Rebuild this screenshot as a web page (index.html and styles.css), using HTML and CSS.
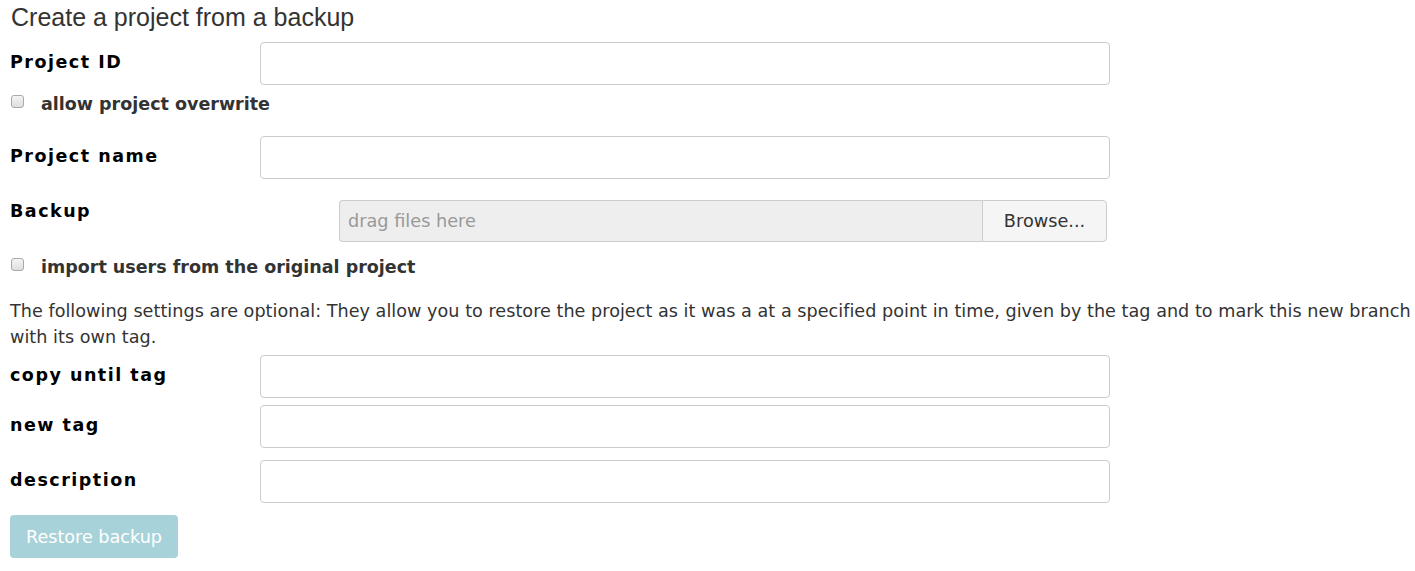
FILE: index.html
```html
<!DOCTYPE html>
<html>
<head>
<meta charset="utf-8">
<link rel="stylesheet" href="styles.css">
</head>
<body>
<div class="page">
  <h1 class="title">Create a project from a backup</h1>
  <div class="row row-id">
    <label class="lbl">Project ID</label>
    <input class="field" type="text">
  </div>
  <div class="check check-overwrite">
    <span class="box"></span>
    <span class="check-text">allow project overwrite</span>
  </div>
  <div class="row row-name">
    <label class="lbl">Project name</label>
    <input class="field" type="text">
  </div>
  <div class="row row-backup">
    <label class="lbl lbl-top">Backup</label>
    <div class="file-group">
      <div class="file-drop">drag files here</div>
      <div class="file-btn">Browse...</div>
    </div>
  </div>
  <div class="check check-users">
    <span class="box"></span>
    <span class="check-text">import users from the original project</span>
  </div>
  <p class="note">The following settings are optional: They allow you to restore the project as it was a at a specified point in time, given by the tag and to mark this new branch with its own tag.</p>
  <div class="row row-copy">
    <label class="lbl">copy until tag</label>
    <input class="field" type="text">
  </div>
  <div class="row row-tag">
    <label class="lbl">new tag</label>
    <input class="field" type="text">
  </div>
  <div class="row row-desc">
    <label class="lbl">description</label>
    <input class="field" type="text">
  </div>
  <button class="restore" disabled>Restore backup</button>
</div>
</body>
</html>
```

FILE: styles.css
```css
html, body {
  margin: 0;
  padding: 0;
  background: #fff;
}
.page {
  padding: 0 0 0 10px;
  font-family: "DejaVu Sans", Verdana, sans-serif;
  font-size: 17.5px;
  color: #333;
}
.title {
  font-family: "Liberation Sans", Arial, sans-serif;
  font-weight: normal;
  font-size: 25px;
  line-height: 28px;
  margin: 3px 0 0 1px;
  color: #333;
}
.row {
  display: flex;
  align-items: flex-start;
}
.lbl {
  width: 250px;
  flex: none;
  font-weight: bold;
  font-size: 17.5px;
  line-height: 22px;
  letter-spacing: 1.5px;
  color: #000;
  padding-top: 9px;
}
.lbl-top {
  padding-top: 0;
}
.field {
  box-sizing: border-box;
  width: 850px;
  height: 43px;
  margin: 0;
  border: 1px solid #ccc;
  border-radius: 4px;
  background: #fff;
  padding: 6px 12px;
}
.row-id { margin-top: 11px; }
.row-name { margin-top: 21px; }
.row-backup { margin-top: 21px; }
.row-copy { margin-top: 5px; }
.row-tag { margin-top: 7px; }
.row-desc { margin-top: 12px; }

.check {
  display: flex;
  align-items: center;
  height: 22px;
}
.check-overwrite { margin-top: 8px; }
.check-users { margin-top: 14px; }
.box {
  box-sizing: border-box;
  width: 13px;
  height: 13px;
  margin-left: 1px;
  margin-top: -5px;
  border: 1px solid #a9a9a9;
  border-radius: 3px;
  background: linear-gradient(#f4f4f4, #dedede);
  flex: none;
}
.check-text {
  margin-left: 17px;
  font-weight: bold;
  font-size: 17.5px;
  color: #333;
}

.file-group {
  display: flex;
  margin-left: 79px;
  width: 768px;
  height: 42px;
}
.file-drop {
  flex: 1;
  box-sizing: border-box;
  background: #eee;
  border: 1px solid #ccc;
  border-right: none;
  border-radius: 4px 0 0 4px;
  color: #999;
  font-size: 17.7px;
  line-height: 40px;
  padding-left: 8px;
}
.file-btn {
  box-sizing: border-box;
  width: 125px;
  background: #f5f5f5;
  border: 1px solid #ccc;
  border-radius: 0 4px 4px 0;
  color: #333;
  font-size: 17.7px;
  line-height: 40px;
  text-align: center;
}

.note {
  margin: 20px 0 0 0;
  font-size: 17.6px;
  line-height: 26px;
  letter-spacing: 0.03px;
  color: #333;
}

.restore {
  display: block;
  margin-top: 12px;
  width: 168px;
  height: 43px;
  border: none;
  border-radius: 4px;
  background: #a8d2d9;
  color: #fff;
  font-family: "DejaVu Sans", Verdana, sans-serif;
  font-size: 17.6px;
  padding: 0;
}
```
